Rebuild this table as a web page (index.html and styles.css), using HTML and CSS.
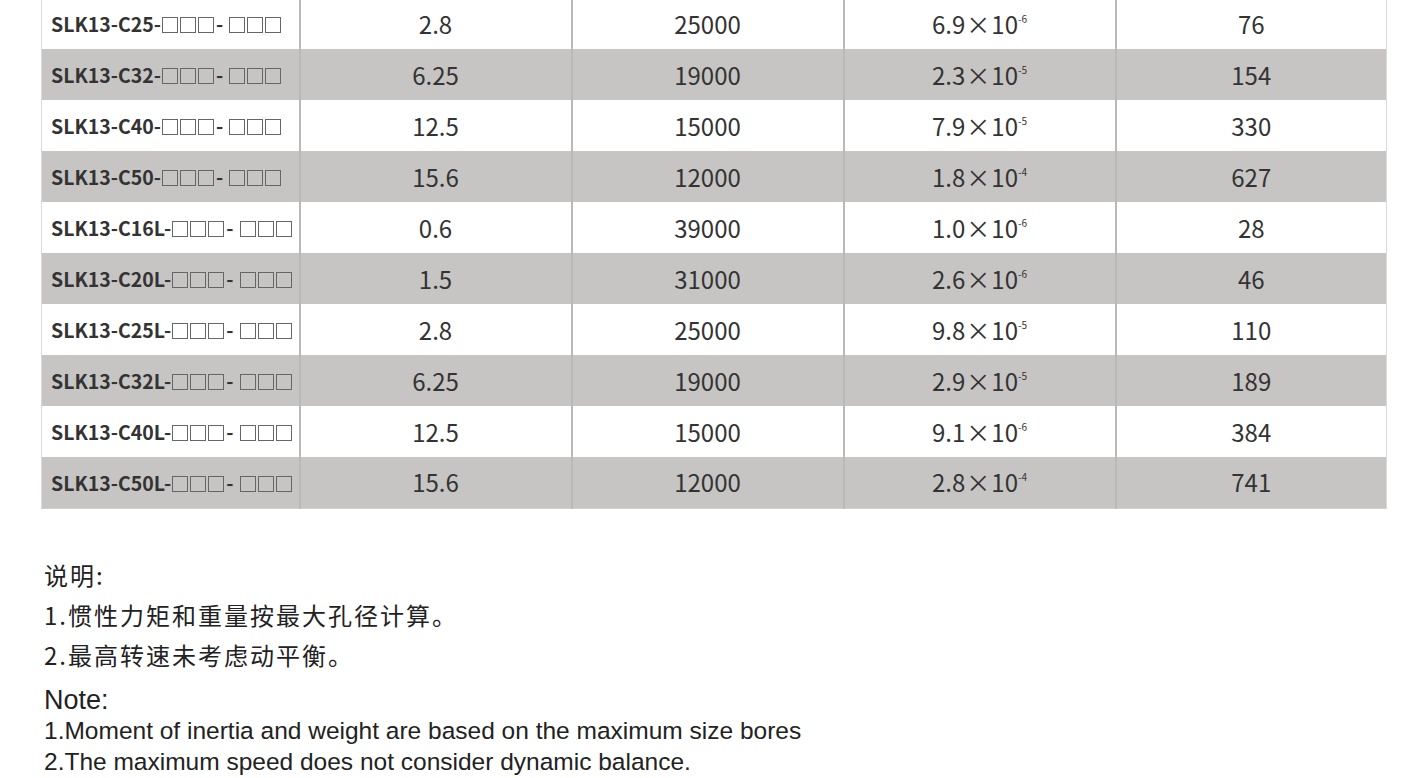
FILE: index.html
```html
<!DOCTYPE html>
<html lang="zh">
<head>
<meta charset="utf-8">
<link rel="stylesheet" href="styles.css">
</head>
<body>
<div class="page">
  <table class="spec">
    <colgroup>
      <col class="c1"><col class="c2"><col class="c3"><col class="c4"><col class="c5">
    </colgroup>
    <tbody>
      <tr><td class="model">SLK13-C25-<span class="bx"><i></i><i></i><i></i></span><span class="dash">-</span><span class="bx"><i></i><i></i><i></i></span></td><td>2.8</td><td>25000</td><td>6.9<span class="x">×</span>10<sup>-6</sup></td><td>76</td></tr>
      <tr class="alt"><td class="model">SLK13-C32-<span class="bx"><i></i><i></i><i></i></span><span class="dash">-</span><span class="bx"><i></i><i></i><i></i></span></td><td>6.25</td><td>19000</td><td>2.3<span class="x">×</span>10<sup>-5</sup></td><td>154</td></tr>
      <tr><td class="model">SLK13-C40-<span class="bx"><i></i><i></i><i></i></span><span class="dash">-</span><span class="bx"><i></i><i></i><i></i></span></td><td>12.5</td><td>15000</td><td>7.9<span class="x">×</span>10<sup>-5</sup></td><td>330</td></tr>
      <tr class="alt"><td class="model">SLK13-C50-<span class="bx"><i></i><i></i><i></i></span><span class="dash">-</span><span class="bx"><i></i><i></i><i></i></span></td><td>15.6</td><td>12000</td><td>1.8<span class="x">×</span>10<sup>-4</sup></td><td>627</td></tr>
      <tr><td class="model">SLK13-C16L-<span class="bx"><i></i><i></i><i></i></span><span class="dash">-</span><span class="bx"><i></i><i></i><i></i></span></td><td>0.6</td><td>39000</td><td>1.0<span class="x">×</span>10<sup>-6</sup></td><td>28</td></tr>
      <tr class="alt"><td class="model">SLK13-C20L-<span class="bx"><i></i><i></i><i></i></span><span class="dash">-</span><span class="bx"><i></i><i></i><i></i></span></td><td>1.5</td><td>31000</td><td>2.6<span class="x">×</span>10<sup>-6</sup></td><td>46</td></tr>
      <tr><td class="model">SLK13-C25L-<span class="bx"><i></i><i></i><i></i></span><span class="dash">-</span><span class="bx"><i></i><i></i><i></i></span></td><td>2.8</td><td>25000</td><td>9.8<span class="x">×</span>10<sup>-5</sup></td><td>110</td></tr>
      <tr class="alt"><td class="model">SLK13-C32L-<span class="bx"><i></i><i></i><i></i></span><span class="dash">-</span><span class="bx"><i></i><i></i><i></i></span></td><td>6.25</td><td>19000</td><td>2.9<span class="x">×</span>10<sup>-5</sup></td><td>189</td></tr>
      <tr><td class="model">SLK13-C40L-<span class="bx"><i></i><i></i><i></i></span><span class="dash">-</span><span class="bx"><i></i><i></i><i></i></span></td><td>12.5</td><td>15000</td><td>9.1<span class="x">×</span>10<sup>-6</sup></td><td>384</td></tr>
      <tr class="alt"><td class="model">SLK13-C50L-<span class="bx"><i></i><i></i><i></i></span><span class="dash">-</span><span class="bx"><i></i><i></i><i></i></span></td><td>15.6</td><td>12000</td><td>2.8<span class="x">×</span>10<sup>-4</sup></td><td>741</td></tr>
    </tbody>
  </table>

  <div class="notes-cn">
    <p>说明:</p>
    <p>1.惯性力矩和重量按最大孔径计算。</p>
    <p>2.最高转速未考虑动平衡。</p>
  </div>

  <div class="notes-en">
    <p class="title">Note:</p>
    <p>1.Moment of inertia and weight are based on the maximum size bores</p>
    <p>2.The maximum speed does not consider dynamic balance.</p>
  </div>
</div>
</body>
</html>
```

FILE: styles.css
```css
html, body {
  margin: 0;
  padding: 0;
  background: #ffffff;
}

.page {
  padding: 0 39px 0 41px;
  overflow: hidden;
  height: 778px;
}

.spec {
  width: 1345px;
  border-collapse: collapse;
  table-layout: fixed;
  margin-top: -2px;
  border-left: 1px solid #d9d9d9;
  border-right: 1px solid #d9d9d9;
  border-bottom: 1px solid #d0d0d0;
  font-family: "Noto Sans CJK SC", "Noto Sans", sans-serif;
  color: #333333;
}

.c1 { width: 258px; }
.c2 { width: 272px; }
.c3 { width: 272px; }
.c4 { width: 272px; }
.c5 { width: 271px; }

.spec tr {
  height: 51px;
  background: #ffffff;
}

.spec tr.alt {
  background: #c6c5c3;
}

.spec td {
  padding: 0;
  text-align: center;
  vertical-align: middle;
  font-size: 24px;
  line-height: 1;
  border-left: 2px solid #b9b9b9;
}

.spec td:first-child {
  border-left: none;
}

.spec td.model {
  text-align: left;
  padding-left: 9px;
  font-size: 19.5px;
  font-weight: 700;
  white-space: nowrap;
}

.bx {
  display: inline-flex;
  gap: 2px;
  margin-left: 1px;
  vertical-align: -1px;
}

.bx i {
  display: block;
  width: 14px;
  height: 14px;
  border: 1.3px solid #666666;
}

.dash {
  display: inline-block;
  margin: 0 5px 0 2px;
}

.x {
  margin: 0 1px;
}

.spec sup {
  font-size: 10px;
  vertical-align: 11px;
}

.notes-cn {
  margin-top: 46px;
  padding-left: 3px;
  font-family: "Noto Sans CJK SC", "Noto Sans", sans-serif;
  font-size: 24px;
  letter-spacing: 2px;
  line-height: 40px;
  color: #222222;
}

.notes-cn p,
.notes-en p {
  margin: 0;
}

.notes-en {
  margin-top: 11px;
  padding-left: 3px;
  font-family: "Liberation Sans", Arial, sans-serif;
  color: #222222;
  font-size: 24.5px;
  line-height: 31px;
}

.notes-en .title {
  font-size: 27px;
  line-height: 29px;
}
```
